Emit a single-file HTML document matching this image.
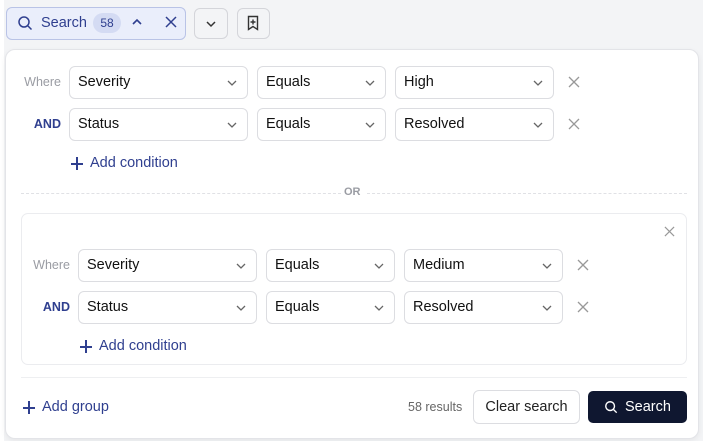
<!DOCTYPE html><html><head><style>
*{box-sizing:border-box;margin:0;padding:0}
body{width:703px;height:441px;background:#f3f4f6;font-family:"Liberation Sans",sans-serif;position:relative;overflow:hidden;color:#111}
.a{position:absolute}
.sel{position:absolute;height:33px;border:1px solid #dcdde1;border-radius:6px;background:#fff;font-size:14.5px;padding:0 0 0 8px;line-height:31px;color:#111}
.sel svg{position:absolute;right:9px;top:11px}
.lbl{position:absolute;font-size:12.5px;text-align:right;width:42px}
.x{position:absolute}
.add{position:absolute;font-size:14.5px;color:#2f3f8f;padding-left:19px}
.add:before{content:"";position:absolute;left:0;top:8px;width:12px;height:1.6px;background:#2f3f8f}
.add:after{content:"";position:absolute;left:5.2px;top:2px;width:1.6px;height:13px;background:#2f3f8f}
</style></head><body>
<div class="a" style="left:0;top:0;width:4px;height:441px;background:#fff"></div>
<div class="a" style="left:6px;top:7px;width:180px;height:33px;border:1px solid #b9c3e6;border-radius:6px;background:#eaeefb"></div>
<svg class="a" style="left:17px;top:15px" width="16" height="16" viewBox="0 0 16 16" fill="none" stroke="#2f3f8f" stroke-width="1.5"><circle cx="7" cy="7" r="5"/><path d="M11 11l3.5 3.5"/></svg>
<div class="a" style="left:41px;top:15px;font-size:14.5px;color:#2f3f8f">Search</div>
<div class="a" style="left:93px;top:13px;width:28px;height:20px;border-radius:10px;background:#d4dbf3;font-size:12px;line-height:20px;text-align:center;color:#2f3f8f">58</div>
<svg class="a" style="left:131px;top:17px" width="12" height="10" viewBox="0 0 12 10" fill="none" stroke="#2f3f8f" stroke-width="1.6"><path d="M2 7l4-4 4 4"/></svg>
<svg class="a" style="left:165px;top:16px" width="12" height="12" viewBox="0 0 12 12" fill="none" stroke="#2f3f8f" stroke-width="1.5"><path d="M1 1l10 10M11 1L1 11"/></svg>
<div class="a" style="left:194px;top:8px;width:34px;height:31px;border:1px solid #d4d5da;border-radius:6px;background:#f3f4f6"></div>
<svg class="a" style="left:205px;top:19px" width="12" height="10" viewBox="0 0 12 10" fill="none" stroke="#333" stroke-width="1.5"><path d="M2 3l4 4 4-4"/></svg>
<div class="a" style="left:237px;top:8px;width:33px;height:31px;border:1px solid #d4d5da;border-radius:6px;background:#f3f4f6"></div>
<svg class="a" style="left:246px;top:15px" width="14" height="16" viewBox="0 0 14 16" fill="none" stroke="#333" stroke-width="1.4"><path d="M2.5 1.5h9v13l-4.5-3-4.5 3z"/><path d="M7 4.5v5M4.5 7h5"/></svg>

<div class="a" style="left:5px;top:49px;width:694px;height:390px;background:#fff;border:1px solid #e3e4e8;border-radius:10px;box-shadow:0 2px 6px rgba(0,0,0,.06)"></div>

<div class="lbl" style="left:19px;top:75px;color:#9a9ca3">Where</div>
<div class="sel" style="left:69px;top:66px;width:179px">Severity<svg width="12" height="10" viewBox="0 0 12 10" fill="none" stroke="#666" stroke-width="1.3"><path d="M2 3l4 4 4-4"/></svg></div>
<div class="sel" style="left:257px;top:66px;width:129px">Equals<svg width="12" height="10" viewBox="0 0 12 10" fill="none" stroke="#666" stroke-width="1.3"><path d="M2 3l4 4 4-4"/></svg></div>
<div class="sel" style="left:395px;top:66px;width:159px">High<svg width="12" height="10" viewBox="0 0 12 10" fill="none" stroke="#666" stroke-width="1.3"><path d="M2 3l4 4 4-4"/></svg></div>
<svg class="x" style="left:568px;top:76px" width="12" height="12" viewBox="0 0 12 12" stroke="#999" stroke-width="1.3"><path d="M1 1l10 10M11 1L1 11"/></svg>
<div class="lbl" style="left:19px;top:117px;color:#2f3f8f;font-weight:bold">AND</div>
<div class="sel" style="left:69px;top:108px;width:179px">Status<svg width="12" height="10" viewBox="0 0 12 10" fill="none" stroke="#666" stroke-width="1.3"><path d="M2 3l4 4 4-4"/></svg></div>
<div class="sel" style="left:257px;top:108px;width:129px">Equals<svg width="12" height="10" viewBox="0 0 12 10" fill="none" stroke="#666" stroke-width="1.3"><path d="M2 3l4 4 4-4"/></svg></div>
<div class="sel" style="left:395px;top:108px;width:159px">Resolved<svg width="12" height="10" viewBox="0 0 12 10" fill="none" stroke="#666" stroke-width="1.3"><path d="M2 3l4 4 4-4"/></svg></div>
<svg class="x" style="left:568px;top:118px" width="12" height="12" viewBox="0 0 12 12" stroke="#999" stroke-width="1.3"><path d="M1 1l10 10M11 1L1 11"/></svg>
<div class="add" style="left:71px;top:155px">Add condition</div>

<div class="a" style="left:21px;top:193px;width:320px;border-top:1px dashed #e0e1e5"></div>
<div class="a" style="left:367px;top:193px;width:320px;border-top:1px dashed #e0e1e5"></div>
<div class="a" style="left:344px;top:186px;font-size:11px;font-weight:bold;color:#9a9ca3">OR</div>

<div class="a" style="left:21px;top:213px;width:666px;height:152px;border:1px solid #ebecef;border-radius:7px"></div>
<svg class="x" style="left:664px;top:226px" width="11" height="11" viewBox="0 0 12 12" stroke="#999" stroke-width="1.3"><path d="M1 1l10 10M11 1L1 11"/></svg>
<div class="lbl" style="left:28px;top:258px;color:#9a9ca3">Where</div>
<div class="sel" style="left:78px;top:249px;width:179px">Severity<svg width="12" height="10" viewBox="0 0 12 10" fill="none" stroke="#666" stroke-width="1.3"><path d="M2 3l4 4 4-4"/></svg></div>
<div class="sel" style="left:266px;top:249px;width:129px">Equals<svg width="12" height="10" viewBox="0 0 12 10" fill="none" stroke="#666" stroke-width="1.3"><path d="M2 3l4 4 4-4"/></svg></div>
<div class="sel" style="left:404px;top:249px;width:159px">Medium<svg width="12" height="10" viewBox="0 0 12 10" fill="none" stroke="#666" stroke-width="1.3"><path d="M2 3l4 4 4-4"/></svg></div>
<svg class="x" style="left:577px;top:259px" width="12" height="12" viewBox="0 0 12 12" stroke="#999" stroke-width="1.3"><path d="M1 1l10 10M11 1L1 11"/></svg>
<div class="lbl" style="left:28px;top:300px;color:#2f3f8f;font-weight:bold">AND</div>
<div class="sel" style="left:78px;top:291px;width:179px">Status<svg width="12" height="10" viewBox="0 0 12 10" fill="none" stroke="#666" stroke-width="1.3"><path d="M2 3l4 4 4-4"/></svg></div>
<div class="sel" style="left:266px;top:291px;width:129px">Equals<svg width="12" height="10" viewBox="0 0 12 10" fill="none" stroke="#666" stroke-width="1.3"><path d="M2 3l4 4 4-4"/></svg></div>
<div class="sel" style="left:404px;top:291px;width:159px">Resolved<svg width="12" height="10" viewBox="0 0 12 10" fill="none" stroke="#666" stroke-width="1.3"><path d="M2 3l4 4 4-4"/></svg></div>
<svg class="x" style="left:577px;top:301px" width="12" height="12" viewBox="0 0 12 12" stroke="#999" stroke-width="1.3"><path d="M1 1l10 10M11 1L1 11"/></svg>
<div class="add" style="left:80px;top:338px">Add condition</div>

<div class="a" style="left:21px;top:377px;width:666px;border-top:1px solid #eeeff1"></div>
<div class="add" style="left:23px;top:399px">Add group</div>
<div class="a" style="left:408px;top:400px;font-size:12.5px;color:#666">58 results</div>
<div class="a" style="left:473px;top:390px;width:107px;height:34px;border:1px solid #dcdde1;border-radius:6px;font-size:14.5px;line-height:32px;text-align:center;color:#222">Clear search</div>
<div class="a" style="left:588px;top:391px;width:99px;height:32px;border-radius:5px;background:#0f1730;color:#fff;font-size:14.5px;line-height:32px;padding-left:37px">Search</div>
<svg class="a" style="left:604px;top:400px" width="14" height="14" viewBox="0 0 16 16" fill="none" stroke="#fff" stroke-width="1.6"><circle cx="7" cy="7" r="5"/><path d="M11 11l3.5 3.5"/></svg>
</body></html>
